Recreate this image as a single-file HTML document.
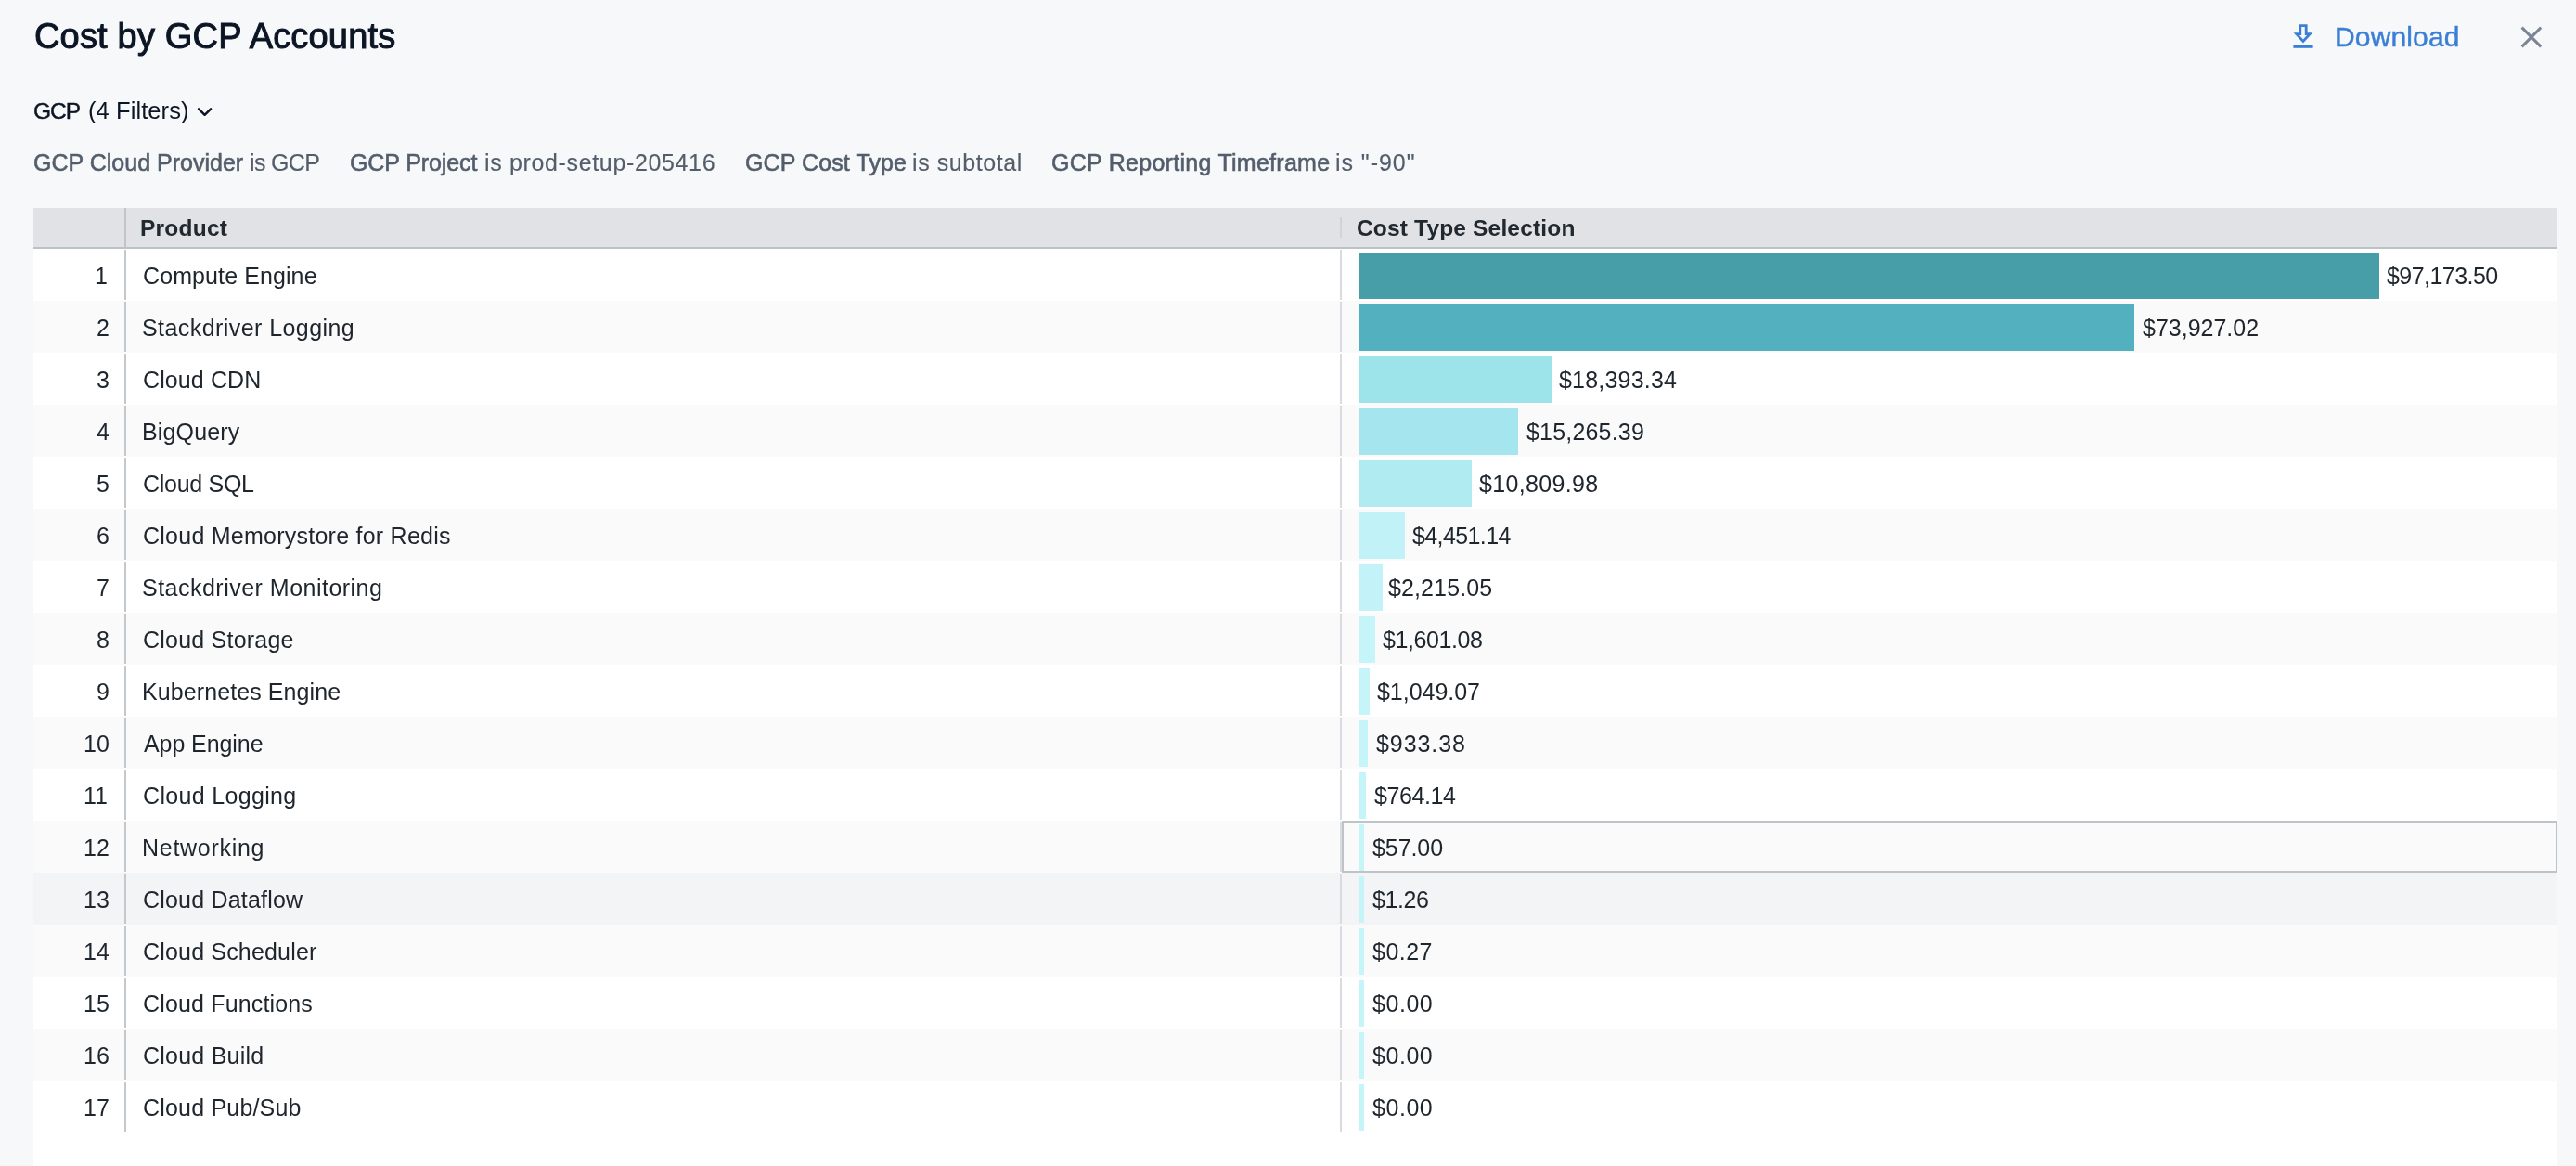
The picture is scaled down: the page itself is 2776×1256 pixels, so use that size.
<!DOCTYPE html>
<html><head><meta charset="utf-8"><title>Cost by GCP Accounts</title><style>
html,body{margin:0;padding:0}
body{width:2776px;height:1256px;background:#f7f8fa;position:relative;overflow:hidden;font-family:"Liberation Sans",sans-serif;}
.t{position:absolute;white-space:pre;line-height:1;will-change:transform}
.r{position:absolute;left:36px;width:2720px;height:56px}
.dv{position:absolute;left:134px;width:2px;height:54px;background:#c3c8cc}
.dv2{position:absolute;left:1444px;width:2px;height:54px;background:#d8dbdf}
.num{position:absolute;right:2659px;font-size:25px;line-height:1;color:#1e252d;white-space:pre;will-change:transform}
.bar{position:absolute;left:1464px;height:50px}
</style></head><body>
<div class="t" style="left:36.8px;top:20px;font-size:38px;letter-spacing:0.179px;color:#0c1524;-webkit-text-stroke:1.0px #0c1524;">Cost by GCP Accounts</div>
<svg style="position:absolute;left:2468px;top:22px" width="28" height="32" viewBox="0 0 28 32"><path d="M10.8 5.7H17.2V14.6H21.2L14 22.4L6.8 14.6H10.8Z" fill="none" stroke="#3a7fd5" stroke-width="2.8" stroke-linejoin="miter"/><rect x="3.4" y="27" width="21.2" height="2.8" fill="#3a7fd5"/></svg>
<div class="t" style="left:2515.5px;top:25px;font-size:30px;letter-spacing:0.143px;color:#3a7fd5;-webkit-text-stroke:0.45px #3a7fd5;">Download</div>
<svg style="position:absolute;left:2714px;top:26px" width="28" height="28" viewBox="0 0 28 28"><path d="M3.6 3.6L24.2 24.4M24.2 3.6L3.6 24.4" stroke="#7b8594" stroke-width="3"/></svg>
<div class="t" style="left:36px;top:108px;font-size:24.5px;letter-spacing:-1.05px;color:#0c1524;-webkit-text-stroke:0.45px #0c1524;">GCP</div>
<div class="t" style="left:95.2px;top:107px;font-size:25.5px;letter-spacing:0.08px;color:#0c1524;">(4 Filters)</div>
<svg style="position:absolute;left:210px;top:112px" width="20" height="16" viewBox="0 0 20 16"><path d="M4.1 5.4L10.6 11.8L17.1 5.4" fill="none" stroke="#0c1524" stroke-width="2.5" stroke-linecap="round" stroke-linejoin="round"/></svg>
<div class="t" style="left:36px;top:163px;font-size:25px;letter-spacing:0.006px;color:#535d6b;-webkit-text-stroke:0.6px #535d6b;">GCP Cloud Provider</div><div class="t" style="left:269px;top:163px;font-size:25px;letter-spacing:-0.66px;color:#535d6b;-webkit-text-stroke:0.15px #535d6b;">is GCP</div>
<div class="t" style="left:377px;top:163px;font-size:25px;letter-spacing:-0.11px;color:#535d6b;-webkit-text-stroke:0.6px #535d6b;">GCP Project</div><div class="t" style="left:522px;top:163px;font-size:25px;letter-spacing:0.647px;color:#535d6b;-webkit-text-stroke:0.15px #535d6b;">is prod-setup-205416</div>
<div class="t" style="left:802.5px;top:163px;font-size:25px;letter-spacing:0.1px;color:#535d6b;-webkit-text-stroke:0.6px #535d6b;">GCP Cost Type</div><div class="t" style="left:982.8px;top:163px;font-size:25px;letter-spacing:0.58px;color:#535d6b;-webkit-text-stroke:0.15px #535d6b;">is subtotal</div>
<div class="t" style="left:1133px;top:163px;font-size:25px;letter-spacing:0.273px;color:#535d6b;-webkit-text-stroke:0.6px #535d6b;">GCP Reporting Timeframe</div><div class="t" style="left:1438.9px;top:163px;font-size:25px;letter-spacing:0.957px;color:#535d6b;-webkit-text-stroke:0.15px #535d6b;">is &quot;-90&quot;</div>
<div style="position:absolute;left:36px;top:224px;width:2720px;height:1032px;background:#fff"></div>
<div style="position:absolute;left:36px;top:224px;width:2720px;height:42px;background:#e0e2e6;border-bottom:2px solid #bcc3c8"></div>
<div style="position:absolute;left:134px;top:224px;width:2px;height:42px;background:#bfc5ca"></div>
<div style="position:absolute;left:1444px;top:234px;width:2px;height:22px;background:#d0d4d8"></div>
<div class="t" style="left:150.8px;top:234px;font-size:24.5px;letter-spacing:0.233px;color:#22282f;font-weight:700;">Product</div>
<div class="t" style="left:1462px;top:234px;font-size:24.5px;letter-spacing:0.167px;color:#22282f;font-weight:700;">Cost Type Selection</div>
<div class="r" style="top:268px;background:#ffffff"></div>
<div class="dv" style="top:269px"></div><div class="dv2" style="top:269px"></div>
<div class="num" style="top:285px;right:2660px">1</div>
<div class="t" style="left:154px;top:285px;font-size:25px;letter-spacing:0.1px;color:#1e252d;">Compute Engine</div>
<div class="bar" style="top:272px;width:1100px;background:#479ea8"></div>
<div class="t" style="left:2572px;top:285px;font-size:25px;letter-spacing:-0.544px;color:#1e252d;">$97,173.50</div>
<div class="r" style="top:324px;background:#fafafa"></div>
<div class="dv" style="top:325px"></div><div class="dv2" style="top:325px"></div>
<div class="num" style="top:341px;right:2658px">2</div>
<div class="t" style="left:153px;top:341px;font-size:25px;letter-spacing:0.433px;color:#1e252d;">Stackdriver Logging</div>
<div class="bar" style="top:328px;width:836px;background:#52b0bf"></div>
<div class="t" style="left:2308.8px;top:341px;font-size:25px;letter-spacing:0.0px;color:#1e252d;">$73,927.02</div>
<div class="r" style="top:380px;background:#ffffff"></div>
<div class="dv" style="top:381px"></div><div class="dv2" style="top:381px"></div>
<div class="num" style="top:397px;right:2658px">3</div>
<div class="t" style="left:154px;top:397px;font-size:25px;letter-spacing:0.112px;color:#1e252d;">Cloud CDN</div>
<div class="bar" style="top:384px;width:208px;background:#9ce3ea"></div>
<div class="t" style="left:1680px;top:397px;font-size:25px;letter-spacing:0.2px;color:#1e252d;">$18,393.34</div>
<div class="r" style="top:436px;background:#fafafa"></div>
<div class="dv" style="top:437px"></div><div class="dv2" style="top:437px"></div>
<div class="num" style="top:453px;right:2658px">4</div>
<div class="t" style="left:153px;top:453px;font-size:25px;letter-spacing:0.143px;color:#1e252d;">BigQuery</div>
<div class="bar" style="top:440px;width:172px;background:#a5e6ee"></div>
<div class="t" style="left:1644.8px;top:453px;font-size:25px;letter-spacing:0.189px;color:#1e252d;">$15,265.39</div>
<div class="r" style="top:492px;background:#ffffff"></div>
<div class="dv" style="top:493px"></div><div class="dv2" style="top:493px"></div>
<div class="num" style="top:509px;right:2658px">5</div>
<div class="t" style="left:154px;top:509px;font-size:25px;letter-spacing:-0.288px;color:#1e252d;">Cloud SQL</div>
<div class="bar" style="top:496px;width:122px;background:#b0ebf2"></div>
<div class="t" style="left:1593.8px;top:509px;font-size:25px;letter-spacing:0.344px;color:#1e252d;">$10,809.98</div>
<div class="r" style="top:548px;background:#fafafa"></div>
<div class="dv" style="top:549px"></div><div class="dv2" style="top:549px"></div>
<div class="num" style="top:565px;right:2658px">6</div>
<div class="t" style="left:154px;top:565px;font-size:25px;letter-spacing:0.246px;color:#1e252d;">Cloud Memorystore for Redis</div>
<div class="bar" style="top:552px;width:50px;background:#c0f2f7"></div>
<div class="t" style="left:1522.4px;top:565px;font-size:25px;letter-spacing:-0.6px;color:#1e252d;">$4,451.14</div>
<div class="r" style="top:604px;background:#ffffff"></div>
<div class="dv" style="top:605px"></div><div class="dv2" style="top:605px"></div>
<div class="num" style="top:621px;right:2658px">7</div>
<div class="t" style="left:153px;top:621px;font-size:25px;letter-spacing:0.486px;color:#1e252d;">Stackdriver Monitoring</div>
<div class="bar" style="top:608px;width:26px;background:#c3f3f8"></div>
<div class="t" style="left:1496.3px;top:621px;font-size:25px;letter-spacing:0.113px;color:#1e252d;">$2,215.05</div>
<div class="r" style="top:660px;background:#fafafa"></div>
<div class="dv" style="top:661px"></div><div class="dv2" style="top:661px"></div>
<div class="num" style="top:677px;right:2658px">8</div>
<div class="t" style="left:154px;top:677px;font-size:25px;letter-spacing:0.225px;color:#1e252d;">Cloud Storage</div>
<div class="bar" style="top:664px;width:18px;background:#c5f4f9"></div>
<div class="t" style="left:1489.5px;top:677px;font-size:25px;letter-spacing:-0.4px;color:#1e252d;">$1,601.08</div>
<div class="r" style="top:716px;background:#ffffff"></div>
<div class="dv" style="top:717px"></div><div class="dv2" style="top:717px"></div>
<div class="num" style="top:733px;right:2658px">9</div>
<div class="t" style="left:153px;top:733px;font-size:25px;letter-spacing:0.087px;color:#1e252d;">Kubernetes Engine</div>
<div class="bar" style="top:720px;width:12px;background:#c5f4f9"></div>
<div class="t" style="left:1483.8px;top:733px;font-size:25px;letter-spacing:-0.037px;color:#1e252d;">$1,049.07</div>
<div class="r" style="top:772px;background:#fafafa"></div>
<div class="dv" style="top:773px"></div><div class="dv2" style="top:773px"></div>
<div class="num" style="top:789px;right:2658px">10</div>
<div class="t" style="left:155px;top:789px;font-size:25px;letter-spacing:-0.078px;color:#1e252d;">App Engine</div>
<div class="bar" style="top:776px;width:10px;background:#c5f4f9"></div>
<div class="t" style="left:1482.7px;top:789px;font-size:25px;letter-spacing:0.917px;color:#1e252d;">$933.38</div>
<div class="r" style="top:828px;background:#ffffff"></div>
<div class="dv" style="top:829px"></div><div class="dv2" style="top:829px"></div>
<div class="num" style="top:845px;right:2660px">11</div>
<div class="t" style="left:154px;top:845px;font-size:25px;letter-spacing:0.325px;color:#1e252d;">Cloud Logging</div>
<div class="bar" style="top:832px;width:8px;background:#c5f4f9"></div>
<div class="t" style="left:1481px;top:845px;font-size:25px;letter-spacing:-0.4px;color:#1e252d;">$764.14</div>
<div class="r" style="top:884px;background:#fafafa"></div>
<div class="dv" style="top:885px"></div><div class="dv2" style="top:885px"></div>
<div class="num" style="top:901px;right:2658px">12</div>
<div class="t" style="left:153px;top:901px;font-size:25px;letter-spacing:0.711px;color:#1e252d;">Networking</div>
<div class="bar" style="top:888px;width:6px;background:#c5f4f9"></div>
<div class="t" style="left:1479.2px;top:901px;font-size:25px;letter-spacing:-0.08px;color:#1e252d;">$57.00</div>
<div class="r" style="top:940px;background:#f3f4f6"></div>
<div class="dv" style="top:941px"></div><div class="dv2" style="top:941px"></div>
<div class="num" style="top:957px;right:2658px">13</div>
<div class="t" style="left:154px;top:957px;font-size:25px;letter-spacing:0.192px;color:#1e252d;">Cloud Dataflow</div>
<div class="bar" style="top:944px;width:6px;background:#c5f4f9"></div>
<div class="t" style="left:1479px;top:957px;font-size:25px;letter-spacing:-0.425px;color:#1e252d;">$1.26</div>
<div class="r" style="top:996px;background:#fafafa"></div>
<div class="dv" style="top:997px"></div><div class="dv2" style="top:997px"></div>
<div class="num" style="top:1013px;right:2658px">14</div>
<div class="t" style="left:154px;top:1013px;font-size:25px;letter-spacing:0.179px;color:#1e252d;">Cloud Scheduler</div>
<div class="bar" style="top:1000px;width:6px;background:#c5f4f9"></div>
<div class="t" style="left:1479.1px;top:1013px;font-size:25px;letter-spacing:0.475px;color:#1e252d;">$0.27</div>
<div class="r" style="top:1052px;background:#ffffff"></div>
<div class="dv" style="top:1053px"></div><div class="dv2" style="top:1053px"></div>
<div class="num" style="top:1069px;right:2658px">15</div>
<div class="t" style="left:154px;top:1069px;font-size:25px;letter-spacing:0.157px;color:#1e252d;">Cloud Functions</div>
<div class="bar" style="top:1056px;width:6px;background:#c5f4f9"></div>
<div class="t" style="left:1479.1px;top:1069px;font-size:25px;letter-spacing:0.55px;color:#1e252d;">$0.00</div>
<div class="r" style="top:1108px;background:#fafafa"></div>
<div class="dv" style="top:1109px"></div><div class="dv2" style="top:1109px"></div>
<div class="num" style="top:1125px;right:2658px">16</div>
<div class="t" style="left:154px;top:1125px;font-size:25px;letter-spacing:0.23px;color:#1e252d;">Cloud Build</div>
<div class="bar" style="top:1112px;width:6px;background:#c5f4f9"></div>
<div class="t" style="left:1479.1px;top:1125px;font-size:25px;letter-spacing:0.55px;color:#1e252d;">$0.00</div>
<div class="r" style="top:1164px;background:#ffffff"></div>
<div class="dv" style="top:1165px"></div><div class="dv2" style="top:1165px"></div>
<div class="num" style="top:1181px;right:2658px">17</div>
<div class="t" style="left:154px;top:1181px;font-size:25px;letter-spacing:0.192px;color:#1e252d;">Cloud Pub/Sub</div>
<div class="bar" style="top:1168px;width:6px;background:#c5f4f9"></div>
<div class="t" style="left:1479.1px;top:1181px;font-size:25px;letter-spacing:0.55px;color:#1e252d;">$0.00</div>
<div style="position:absolute;left:1446px;top:884px;width:1306px;height:52px;border:2px solid #bfc3c8"></div>
</body></html>
